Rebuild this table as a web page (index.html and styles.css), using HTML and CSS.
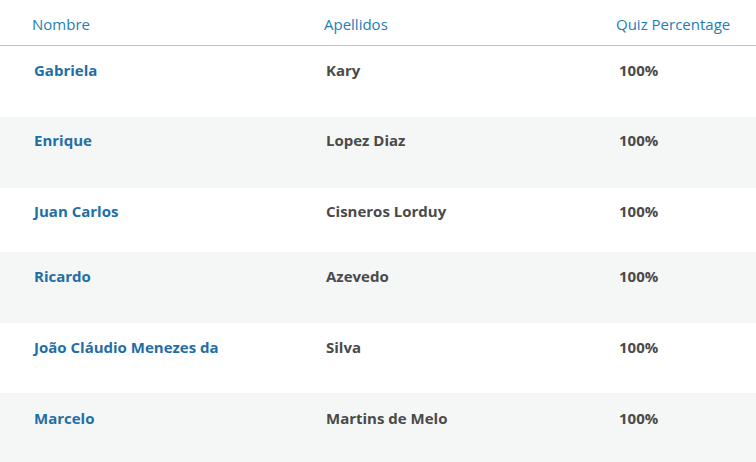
FILE: index.html
```html
<!DOCTYPE html>
<html lang="es">
<head>
<meta charset="utf-8">
<title>Quiz results</title>
<link rel="stylesheet" href="styles.css">
</head>
<body>
<div class="table">
  <div class="row head">
    <div class="cell">Nombre</div>
    <div class="cell">Apellidos</div>
    <div class="cell">Quiz Percentage</div>
  </div>
  <div class="row r1">
    <div class="cell name">Gabriela</div>
    <div class="cell last">Kary</div>
    <div class="cell pct">100%</div>
  </div>
  <div class="row alt r2">
    <div class="cell name">Enrique</div>
    <div class="cell last">Lopez Diaz</div>
    <div class="cell pct">100%</div>
  </div>
  <div class="row r3">
    <div class="cell name">Juan Carlos</div>
    <div class="cell last">Cisneros Lorduy</div>
    <div class="cell pct">100%</div>
  </div>
  <div class="row alt r4">
    <div class="cell name">Ricardo</div>
    <div class="cell last">Azevedo</div>
    <div class="cell pct">100%</div>
  </div>
  <div class="row r5">
    <div class="cell name">João Cláudio Menezes da</div>
    <div class="cell last">Silva</div>
    <div class="cell pct">100%</div>
  </div>
  <div class="row alt r6">
    <div class="cell name">Marcelo</div>
    <div class="cell last">Martins de Melo</div>
    <div class="cell pct">100%</div>
  </div>
</div>
</body>
</html>
```
FILE: styles.css
```css
html, body {
  margin: 0;
  padding: 0;
  background: #ffffff;
}
body {
  font-family: "Open Sans", "Noto Sans", sans-serif;
  font-size: 15px;
  line-height: 20px;
}
.table {
  display: flex;
  flex-direction: column;
}
.row {
  display: grid;
  grid-template-columns: 292px 292px 1fr;
  align-items: start;
  box-sizing: border-box;
  padding-top: 14px;
}
.row .cell {
  padding-left: 34px;
  font-weight: 700;
}
.row .cell.pct {
  padding-left: 35px;
}
.head {
  height: 46px;
  padding-top: 14px;
  border-bottom: 1px solid #c4c4c4;
}
.head .cell {
  padding-left: 32px;
  font-weight: 400;
  color: #1f7db5;
}
.alt {
  background: #f5f6f6;
}
.name {
  color: #1f6ea6;
}
.last, .pct {
  color: #4a4a4a;
}
.r1 { height: 71px; }
.r2 { height: 71px; padding-top: 13px; }
.r3 { height: 64px; padding-top: 13px; }
.r4 { height: 71px; }
.r5 { height: 70px; }
.r6 { height: 69px; padding-top: 15px; }
```
